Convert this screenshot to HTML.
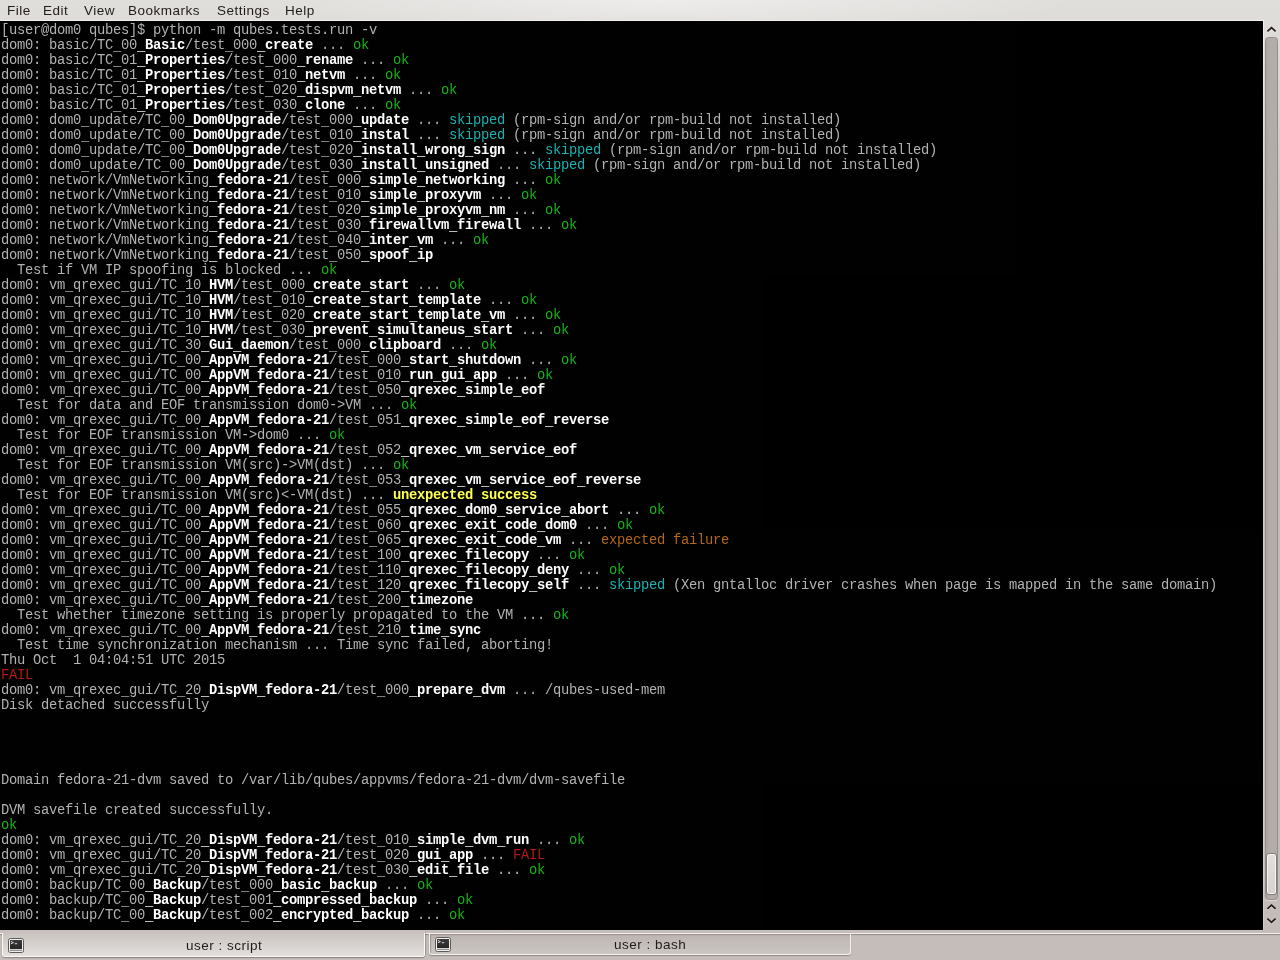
<!DOCTYPE html>
<html><head><meta charset="utf-8">
<style>
html,body{margin:0;padding:0;}
body{width:1280px;height:960px;overflow:hidden;position:relative;background:#c4bcb8;font-family:"Liberation Sans",sans-serif;}
#win{position:absolute;left:0;top:0;width:1280px;height:930px;background:radial-gradient(ellipse 420px 34px at 660px 0px,rgba(255,255,255,.45),rgba(255,255,255,0)),linear-gradient(#e0dedb 0px,#d9d5d2 100px,#cfcac7 177px,#c5bebb 250px,#c4bcb8 350px,#c4bcb8 930px);}
#menu{position:absolute;left:0;top:0;width:1280px;height:20px;will-change:transform;opacity:.999;font-size:13.5px;letter-spacing:0.5px;color:#1f1c1b;}
#menu span{position:absolute;top:3px;white-space:pre;}
#term{position:absolute;left:0;top:21px;width:1263px;height:909px;background:#000;overflow:hidden;will-change:transform;opacity:.999;}
#frame{position:absolute;left:0;top:20px;width:1264px;height:910px;background:linear-gradient(#f3f1ef,#e2dedb 100px,#d5cdca 260px,#d3cbc8);}
.l{position:absolute;left:1px;white-space:pre;font-family:"Liberation Mono",monospace;font-size:13.8px;letter-spacing:-0.28px;line-height:15px;height:15px;color:#b2b2b2;}
.l b{color:#fff;font-weight:bold;}
.l i{font-style:normal;position:relative;top:1px;}
.g{color:#18b218}.c{color:#18b2b2}.o{color:#b26818}.r{color:#b21818}.y{color:#ffff54;font-weight:bold}
#sb{position:absolute;left:1263px;top:21px;width:17px;height:909px;}
#trough{position:absolute;left:1265px;top:37px;width:13px;height:863px;box-sizing:border-box;border:1px solid #948e8b;border-radius:3.5px;background:linear-gradient(90deg,#aaa5a1,#b3aca9 35%,#b3aca9);box-shadow:0 1px 0 rgba(255,255,255,.45);}
#thumb{position:absolute;left:1266px;top:853px;width:11px;height:42px;box-sizing:border-box;border:1px solid #7f7a76;border-radius:3px;background:linear-gradient(#e2dfdc,#d6d2cf);box-shadow:inset 0 0 0 1px rgba(255,255,255,.75);}
svg{position:absolute;}
#tabs{position:absolute;left:0;top:930px;width:1280px;height:30px;background:#c4bdb9;}
#tabline{position:absolute;left:0;top:933px;width:1280px;height:1px;background:#f4f2f0;box-shadow:0 1px 1px rgba(90,80,75,.55);}
#tab1{position:absolute;left:2px;top:930px;width:423px;height:26px;background:linear-gradient(#c7c0bc,#e3e0dd);border-bottom:1px solid #fbfaf9;border-bottom-left-radius:3px;border-bottom-right-radius:3px;box-shadow:0 1px 1px rgba(80,70,65,.5);}
#tab1r{position:absolute;left:424px;top:933px;width:1px;height:22px;background:#fbfaf9;box-shadow:1px 0 1px rgba(80,70,65,.35);}
#tab1l{position:absolute;left:2px;top:933px;width:1px;height:22px;background:#fbfaf9;}
#tab1bg{position:absolute;left:0;top:930px;width:425px;height:3px;background:#c7c0bc;}
#tab2{position:absolute;left:429px;top:934px;width:420px;height:20px;background:linear-gradient(#bcb4b0,#ccc7c3);border-left:1px solid #f4f2f0;border-right:1px solid #f4f2f0;border-bottom:1px solid #f4f2f0;border-bottom-left-radius:3px;border-bottom-right-radius:3px;box-shadow:0 1px 1px rgba(80,70,65,.45), inset 1px 1px 1px rgba(90,80,75,.35);}
.tt{position:absolute;will-change:transform;opacity:.999;font-size:13.5px;letter-spacing:0.5px;color:#1f1c1b;white-space:pre;}
.icon{position:absolute;width:16px;height:15px;}
</style></head><body>
<div id="win"></div>
<div id="menu">
<span style="left:7px">File</span><span style="left:43px">Edit</span><span style="left:84px">View</span><span style="left:128px">Bookmarks</span><span style="left:217px">Settings</span><span style="left:285px">Help</span>
</div>
<div id="frame"></div>
<div id="term">
<div class="l" style="top:2px">[user@dom0 qubes]$ python -m qubes.tests.run -v</div>
<div class="l" style="top:17px">dom0: basic/TC<i>_</i>00<b><i>_</i>Basic</b>/test<i>_</i>000<b><i>_</i>create</b> ... <span class="g">ok</span></div>
<div class="l" style="top:32px">dom0: basic/TC<i>_</i>01<b><i>_</i>Properties</b>/test<i>_</i>000<b><i>_</i>rename</b> ... <span class="g">ok</span></div>
<div class="l" style="top:47px">dom0: basic/TC<i>_</i>01<b><i>_</i>Properties</b>/test<i>_</i>010<b><i>_</i>netvm</b> ... <span class="g">ok</span></div>
<div class="l" style="top:62px">dom0: basic/TC<i>_</i>01<b><i>_</i>Properties</b>/test<i>_</i>020<b><i>_</i>dispvm<i>_</i>netvm</b> ... <span class="g">ok</span></div>
<div class="l" style="top:77px">dom0: basic/TC<i>_</i>01<b><i>_</i>Properties</b>/test<i>_</i>030<b><i>_</i>clone</b> ... <span class="g">ok</span></div>
<div class="l" style="top:92px">dom0: dom0<i>_</i>update/TC<i>_</i>00<b><i>_</i>Dom0Upgrade</b>/test<i>_</i>000<b><i>_</i>update</b> ... <span class="c">skipped</span> (rpm-sign and/or rpm-build not installed)</div>
<div class="l" style="top:107px">dom0: dom0<i>_</i>update/TC<i>_</i>00<b><i>_</i>Dom0Upgrade</b>/test<i>_</i>010<b><i>_</i>instal</b> ... <span class="c">skipped</span> (rpm-sign and/or rpm-build not installed)</div>
<div class="l" style="top:122px">dom0: dom0<i>_</i>update/TC<i>_</i>00<b><i>_</i>Dom0Upgrade</b>/test<i>_</i>020<b><i>_</i>install<i>_</i>wrong<i>_</i>sign</b> ... <span class="c">skipped</span> (rpm-sign and/or rpm-build not installed)</div>
<div class="l" style="top:137px">dom0: dom0<i>_</i>update/TC<i>_</i>00<b><i>_</i>Dom0Upgrade</b>/test<i>_</i>030<b><i>_</i>install<i>_</i>unsigned</b> ... <span class="c">skipped</span> (rpm-sign and/or rpm-build not installed)</div>
<div class="l" style="top:152px">dom0: network/VmNetworking<b><i>_</i>fedora-21</b>/test<i>_</i>000<b><i>_</i>simple<i>_</i>networking</b> ... <span class="g">ok</span></div>
<div class="l" style="top:167px">dom0: network/VmNetworking<b><i>_</i>fedora-21</b>/test<i>_</i>010<b><i>_</i>simple<i>_</i>proxyvm</b> ... <span class="g">ok</span></div>
<div class="l" style="top:182px">dom0: network/VmNetworking<b><i>_</i>fedora-21</b>/test<i>_</i>020<b><i>_</i>simple<i>_</i>proxyvm<i>_</i>nm</b> ... <span class="g">ok</span></div>
<div class="l" style="top:197px">dom0: network/VmNetworking<b><i>_</i>fedora-21</b>/test<i>_</i>030<b><i>_</i>firewallvm<i>_</i>firewall</b> ... <span class="g">ok</span></div>
<div class="l" style="top:212px">dom0: network/VmNetworking<b><i>_</i>fedora-21</b>/test<i>_</i>040<b><i>_</i>inter<i>_</i>vm</b> ... <span class="g">ok</span></div>
<div class="l" style="top:227px">dom0: network/VmNetworking<b><i>_</i>fedora-21</b>/test<i>_</i>050<b><i>_</i>spoof<i>_</i>ip</b></div>
<div class="l" style="top:242px">  Test if VM IP spoofing is blocked ... <span class="g">ok</span></div>
<div class="l" style="top:257px">dom0: vm<i>_</i>qrexec<i>_</i>gui/TC<i>_</i>10<b><i>_</i>HVM</b>/test<i>_</i>000<b><i>_</i>create<i>_</i>start</b> ... <span class="g">ok</span></div>
<div class="l" style="top:272px">dom0: vm<i>_</i>qrexec<i>_</i>gui/TC<i>_</i>10<b><i>_</i>HVM</b>/test<i>_</i>010<b><i>_</i>create<i>_</i>start<i>_</i>template</b> ... <span class="g">ok</span></div>
<div class="l" style="top:287px">dom0: vm<i>_</i>qrexec<i>_</i>gui/TC<i>_</i>10<b><i>_</i>HVM</b>/test<i>_</i>020<b><i>_</i>create<i>_</i>start<i>_</i>template<i>_</i>vm</b> ... <span class="g">ok</span></div>
<div class="l" style="top:302px">dom0: vm<i>_</i>qrexec<i>_</i>gui/TC<i>_</i>10<b><i>_</i>HVM</b>/test<i>_</i>030<b><i>_</i>prevent<i>_</i>simultaneus<i>_</i>start</b> ... <span class="g">ok</span></div>
<div class="l" style="top:317px">dom0: vm<i>_</i>qrexec<i>_</i>gui/TC<i>_</i>30<b><i>_</i>Gui<i>_</i>daemon</b>/test<i>_</i>000<b><i>_</i>clipboard</b> ... <span class="g">ok</span></div>
<div class="l" style="top:332px">dom0: vm<i>_</i>qrexec<i>_</i>gui/TC<i>_</i>00<b><i>_</i>AppVM<i>_</i>fedora-21</b>/test<i>_</i>000<b><i>_</i>start<i>_</i>shutdown</b> ... <span class="g">ok</span></div>
<div class="l" style="top:347px">dom0: vm<i>_</i>qrexec<i>_</i>gui/TC<i>_</i>00<b><i>_</i>AppVM<i>_</i>fedora-21</b>/test<i>_</i>010<b><i>_</i>run<i>_</i>gui<i>_</i>app</b> ... <span class="g">ok</span></div>
<div class="l" style="top:362px">dom0: vm<i>_</i>qrexec<i>_</i>gui/TC<i>_</i>00<b><i>_</i>AppVM<i>_</i>fedora-21</b>/test<i>_</i>050<b><i>_</i>qrexec<i>_</i>simple<i>_</i>eof</b></div>
<div class="l" style="top:377px">  Test for data and EOF transmission dom0-&gt;VM ... <span class="g">ok</span></div>
<div class="l" style="top:392px">dom0: vm<i>_</i>qrexec<i>_</i>gui/TC<i>_</i>00<b><i>_</i>AppVM<i>_</i>fedora-21</b>/test<i>_</i>051<b><i>_</i>qrexec<i>_</i>simple<i>_</i>eof<i>_</i>reverse</b></div>
<div class="l" style="top:407px">  Test for EOF transmission VM-&gt;dom0 ... <span class="g">ok</span></div>
<div class="l" style="top:422px">dom0: vm<i>_</i>qrexec<i>_</i>gui/TC<i>_</i>00<b><i>_</i>AppVM<i>_</i>fedora-21</b>/test<i>_</i>052<b><i>_</i>qrexec<i>_</i>vm<i>_</i>service<i>_</i>eof</b></div>
<div class="l" style="top:437px">  Test for EOF transmission VM(src)-&gt;VM(dst) ... <span class="g">ok</span></div>
<div class="l" style="top:452px">dom0: vm<i>_</i>qrexec<i>_</i>gui/TC<i>_</i>00<b><i>_</i>AppVM<i>_</i>fedora-21</b>/test<i>_</i>053<b><i>_</i>qrexec<i>_</i>vm<i>_</i>service<i>_</i>eof<i>_</i>reverse</b></div>
<div class="l" style="top:467px">  Test for EOF transmission VM(src)&lt;-VM(dst) ... <span class="y">unexpected success</span></div>
<div class="l" style="top:482px">dom0: vm<i>_</i>qrexec<i>_</i>gui/TC<i>_</i>00<b><i>_</i>AppVM<i>_</i>fedora-21</b>/test<i>_</i>055<b><i>_</i>qrexec<i>_</i>dom0<i>_</i>service<i>_</i>abort</b> ... <span class="g">ok</span></div>
<div class="l" style="top:497px">dom0: vm<i>_</i>qrexec<i>_</i>gui/TC<i>_</i>00<b><i>_</i>AppVM<i>_</i>fedora-21</b>/test<i>_</i>060<b><i>_</i>qrexec<i>_</i>exit<i>_</i>code<i>_</i>dom0</b> ... <span class="g">ok</span></div>
<div class="l" style="top:512px">dom0: vm<i>_</i>qrexec<i>_</i>gui/TC<i>_</i>00<b><i>_</i>AppVM<i>_</i>fedora-21</b>/test<i>_</i>065<b><i>_</i>qrexec<i>_</i>exit<i>_</i>code<i>_</i>vm</b> ... <span class="o">expected failure</span></div>
<div class="l" style="top:527px">dom0: vm<i>_</i>qrexec<i>_</i>gui/TC<i>_</i>00<b><i>_</i>AppVM<i>_</i>fedora-21</b>/test<i>_</i>100<b><i>_</i>qrexec<i>_</i>filecopy</b> ... <span class="g">ok</span></div>
<div class="l" style="top:542px">dom0: vm<i>_</i>qrexec<i>_</i>gui/TC<i>_</i>00<b><i>_</i>AppVM<i>_</i>fedora-21</b>/test<i>_</i>110<b><i>_</i>qrexec<i>_</i>filecopy<i>_</i>deny</b> ... <span class="g">ok</span></div>
<div class="l" style="top:557px">dom0: vm<i>_</i>qrexec<i>_</i>gui/TC<i>_</i>00<b><i>_</i>AppVM<i>_</i>fedora-21</b>/test<i>_</i>120<b><i>_</i>qrexec<i>_</i>filecopy<i>_</i>self</b> ... <span class="c">skipped</span> (Xen gntalloc driver crashes when page is mapped in the same domain)</div>
<div class="l" style="top:572px">dom0: vm<i>_</i>qrexec<i>_</i>gui/TC<i>_</i>00<b><i>_</i>AppVM<i>_</i>fedora-21</b>/test<i>_</i>200<b><i>_</i>timezone</b></div>
<div class="l" style="top:587px">  Test whether timezone setting is properly propagated to the VM ... <span class="g">ok</span></div>
<div class="l" style="top:602px">dom0: vm<i>_</i>qrexec<i>_</i>gui/TC<i>_</i>00<b><i>_</i>AppVM<i>_</i>fedora-21</b>/test<i>_</i>210<b><i>_</i>time<i>_</i>sync</b></div>
<div class="l" style="top:617px">  Test time synchronization mechanism ... Time sync failed, aborting!</div>
<div class="l" style="top:632px">Thu Oct  1 04:04:51 UTC 2015</div>
<div class="l" style="top:647px"><span class="r">FAIL</span></div>
<div class="l" style="top:662px">dom0: vm<i>_</i>qrexec<i>_</i>gui/TC<i>_</i>20<b><i>_</i>DispVM<i>_</i>fedora-21</b>/test<i>_</i>000<b><i>_</i>prepare<i>_</i>dvm</b> ... /qubes-used-mem</div>
<div class="l" style="top:677px">Disk detached successfully</div>
<div class="l" style="top:752px">Domain fedora-21-dvm saved to /var/lib/qubes/appvms/fedora-21-dvm/dvm-savefile</div>
<div class="l" style="top:782px">DVM savefile created successfully.</div>
<div class="l" style="top:797px"><span class="g">ok</span></div>
<div class="l" style="top:812px">dom0: vm<i>_</i>qrexec<i>_</i>gui/TC<i>_</i>20<b><i>_</i>DispVM<i>_</i>fedora-21</b>/test<i>_</i>010<b><i>_</i>simple<i>_</i>dvm<i>_</i>run</b> ... <span class="g">ok</span></div>
<div class="l" style="top:827px">dom0: vm<i>_</i>qrexec<i>_</i>gui/TC<i>_</i>20<b><i>_</i>DispVM<i>_</i>fedora-21</b>/test<i>_</i>020<b><i>_</i>gui<i>_</i>app</b> ... <span class="r">FAIL</span></div>
<div class="l" style="top:842px">dom0: vm<i>_</i>qrexec<i>_</i>gui/TC<i>_</i>20<b><i>_</i>DispVM<i>_</i>fedora-21</b>/test<i>_</i>030<b><i>_</i>edit<i>_</i>file</b> ... <span class="g">ok</span></div>
<div class="l" style="top:857px">dom0: backup/TC<i>_</i>00<b><i>_</i>Backup</b>/test<i>_</i>000<b><i>_</i>basic<i>_</i>backup</b> ... <span class="g">ok</span></div>
<div class="l" style="top:872px">dom0: backup/TC<i>_</i>00<b><i>_</i>Backup</b>/test<i>_</i>001<b><i>_</i>compressed<i>_</i>backup</b> ... <span class="g">ok</span></div>
<div class="l" style="top:887px">dom0: backup/TC<i>_</i>00<b><i>_</i>Backup</b>/test<i>_</i>002<b><i>_</i>encrypted<i>_</i>backup</b> ... <span class="g">ok</span></div>
</div>
<div id="trough"></div>
<div id="thumb"></div>
<svg style="left:1263px;top:21px" width="17" height="909" viewBox="0 0 17 909">
<path d="M4.4 10.4 L8.5 6.7 L12.6 10.4" transform="translate(0,1)" fill="none" stroke="rgba(255,255,255,.45)" stroke-width="1.7"/><path d="M4.4 10.4 L8.5 6.7 L12.6 10.4" fill="none" stroke="#1e1b1a" stroke-width="1.7"/>
<path d="M4.4 887.8 L8.5 884.1 L12.6 887.8" transform="translate(0,1)" fill="none" stroke="rgba(255,255,255,.45)" stroke-width="1.7"/><path d="M4.4 887.8 L8.5 884.1 L12.6 887.8" fill="none" stroke="#1e1b1a" stroke-width="1.7"/>
<path d="M4.4 897.7 L8.5 901.4 L12.6 897.7" transform="translate(0,1)" fill="none" stroke="rgba(255,255,255,.45)" stroke-width="1.7"/><path d="M4.4 897.7 L8.5 901.4 L12.6 897.7" fill="none" stroke="#1e1b1a" stroke-width="1.7"/>
</svg>
<div id="tabs"></div>
<div id="tabline"></div>
<div id="tab2"></div>
<div id="tab1"></div><div id="tab1bg"></div><div id="tab1l"></div><div id="tab1r"></div>
<svg class="icon" style="left:8px;top:938px" width="16" height="15" viewBox="0 0 16 15">
<defs><linearGradient id="scr1" x1="0" y1="0" x2="0" y2="1"><stop offset="0" stop-color="#3a3a3a"/><stop offset="1" stop-color="#262626"/></linearGradient></defs>
<rect x="0.5" y="0.5" width="15" height="14" rx="2" fill="#d9d7d5" stroke="#5c5957"/>
<rect x="1.5" y="1.5" width="13" height="12" rx="1" fill="none" stroke="#f2f1f0"/>
<rect x="2" y="2" width="12" height="9" fill="url(#scr1)"/>
<path d="M2.9 3.4 L5.4 4.6 L2.9 5.8" fill="none" stroke="#dcdcdc" stroke-width="1"/>
<rect x="6.8" y="5.2" width="2.3" height="1" fill="#dcdcdc"/>
<rect x="2" y="12" width="12" height="1" fill="#8f8d8b"/>
</svg>
<div class="tt" style="left:186px;top:938px">user : script</div>
<svg class="icon" style="left:435px;top:937px" width="16" height="15" viewBox="0 0 16 15">
<defs><linearGradient id="scr2" x1="0" y1="0" x2="0" y2="1"><stop offset="0" stop-color="#3a3a3a"/><stop offset="1" stop-color="#262626"/></linearGradient></defs>
<rect x="0.5" y="0.5" width="15" height="14" rx="2" fill="#d9d7d5" stroke="#5c5957"/>
<rect x="1.5" y="1.5" width="13" height="12" rx="1" fill="none" stroke="#f2f1f0"/>
<rect x="2" y="2" width="12" height="9" fill="url(#scr2)"/>
<path d="M2.9 3.4 L5.4 4.6 L2.9 5.8" fill="none" stroke="#dcdcdc" stroke-width="1"/>
<rect x="6.8" y="5.2" width="2.3" height="1" fill="#dcdcdc"/>
<rect x="2" y="12" width="12" height="1" fill="#8f8d8b"/>
</svg>
<div class="tt" style="left:614px;top:937px">user : bash</div>
</body></html>
